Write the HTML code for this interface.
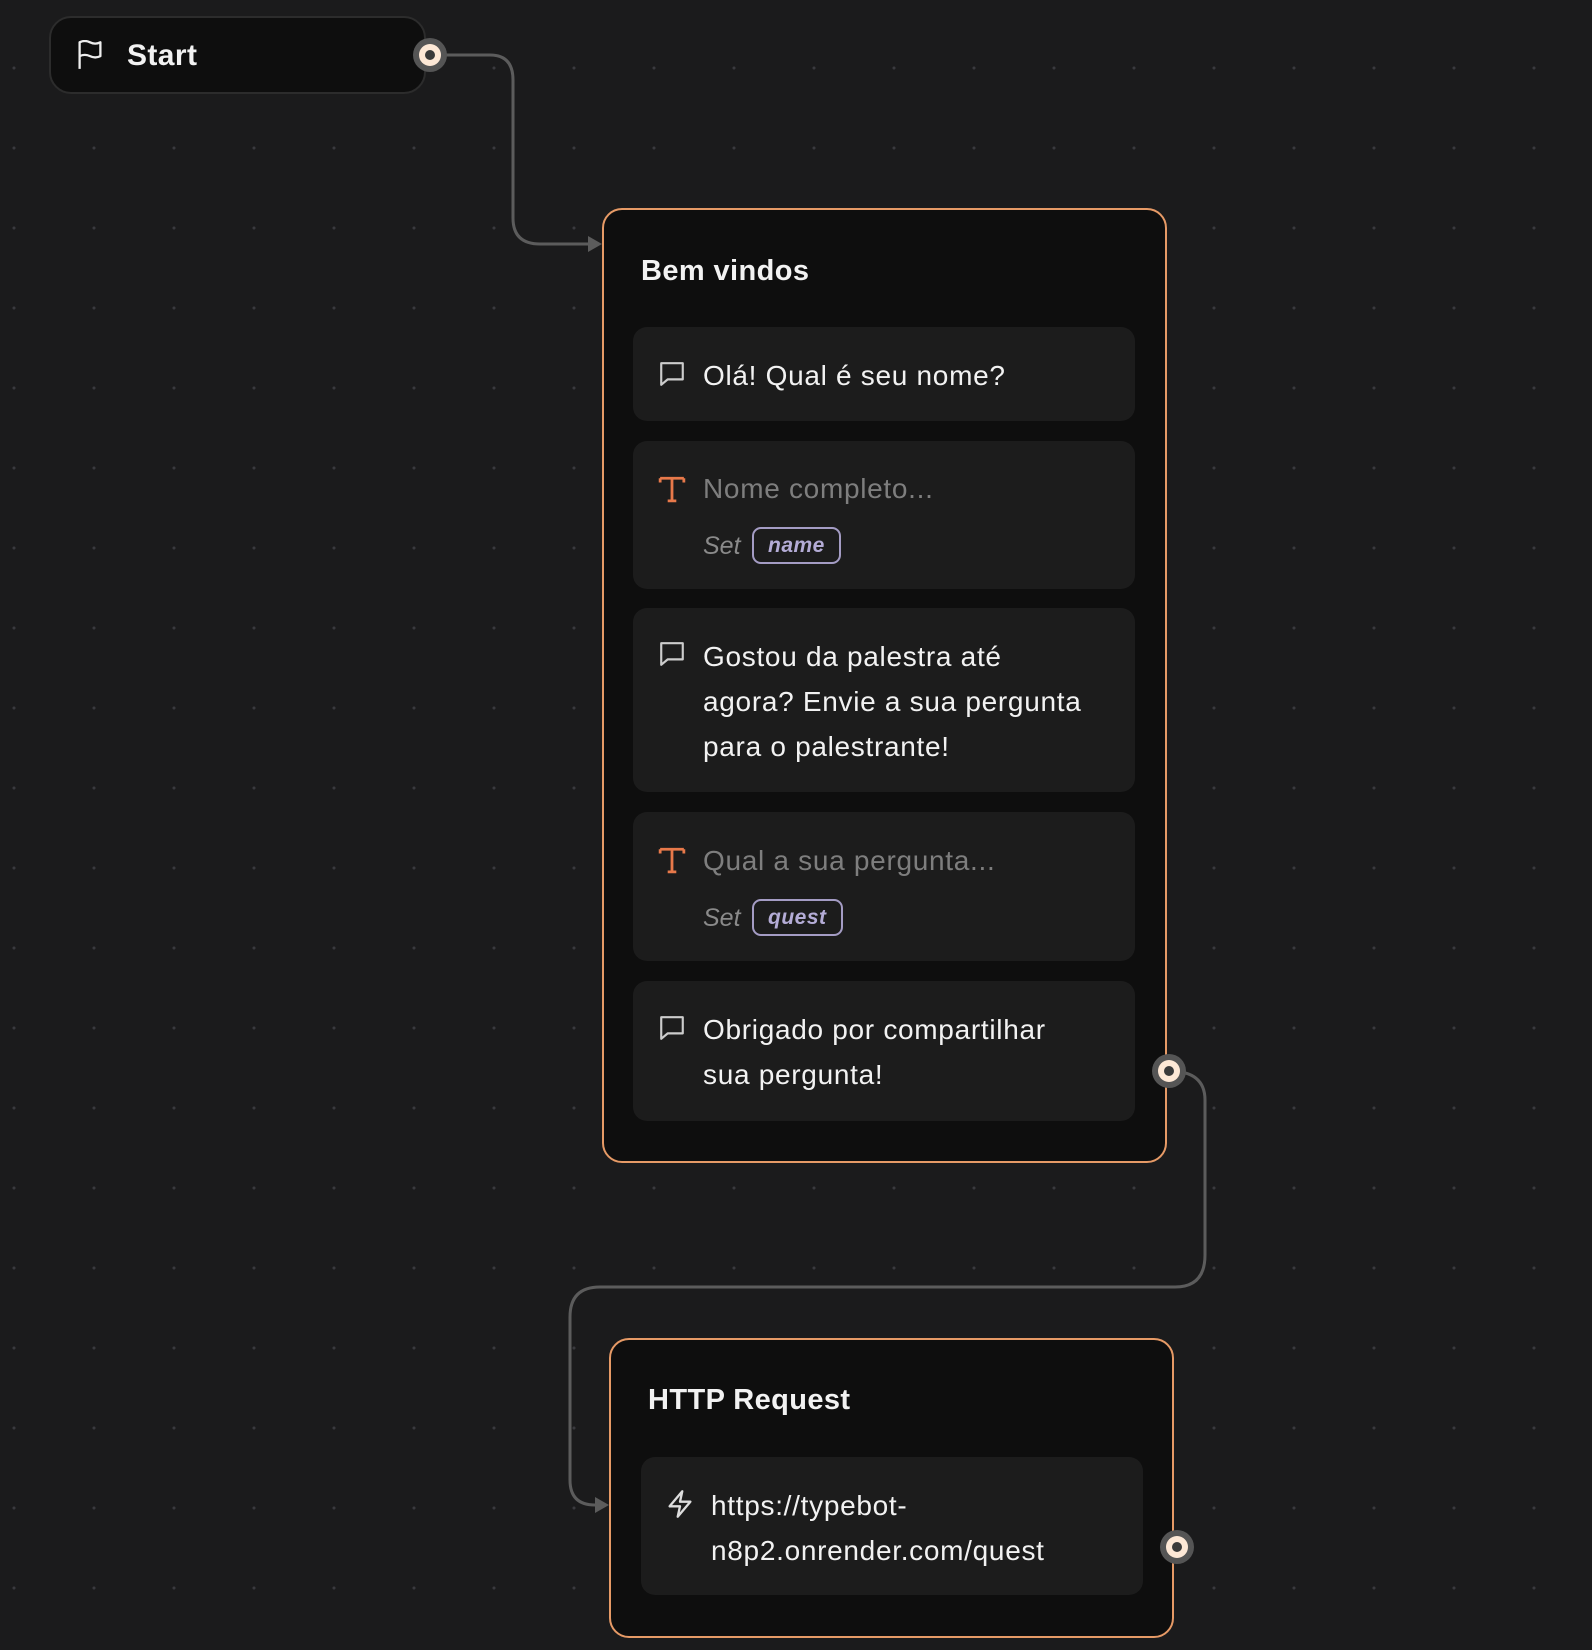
<!DOCTYPE html>
<html><head><meta charset="utf-8"><style>
*{margin:0;padding:0;box-sizing:border-box}
body{width:1592px;height:1650px;overflow:hidden;background:#1b1b1c;font-family:"Liberation Sans",sans-serif;color:#f2f2f2;position:relative;
background-image:radial-gradient(circle,#3a3a3e 1.3px,transparent 1.8px);background-size:80px 80px;background-position:-26px 28px}
.abs{position:absolute}
.node{position:absolute;background:#0e0e0e;border-radius:20px}
.blk{position:absolute;left:633px;width:502px;background:#1c1c1c;border-radius:14px}
.t{position:absolute;left:70px;font-size:28px;line-height:45px;white-space:nowrap;letter-spacing:0.7px}
.ic{position:absolute;left:25px}
.ph{color:#7e7e7e}
.set{position:absolute;left:70px;font-size:25px;font-style:italic;color:#8a8a8a}
.pill{position:absolute;left:119px;height:37px;border:2px solid #a49cc4;border-radius:9px;color:#b4acd6;font-weight:bold;font-style:italic;font-size:21px;line-height:33px;padding:0 14px;letter-spacing:0.5px}
.title{position:absolute;font-weight:bold;font-size:29px;letter-spacing:0.4px}
</style></head><body>
<svg class="abs" style="left:0;top:0" width="1592" height="1650">
<path d="M430 55 H490 Q513 55 513 80 V218 Q513 244 540 244 H590" fill="none" stroke="#5c5c5c" stroke-width="3"/>
<path d="M588 236 L602 244 L588 252Z" fill="#5c5c5c"/>
<path d="M1169 1071 Q1205 1071 1205 1100 V1255 Q1205 1287 1175 1287 H600 Q570 1287 570 1317 V1480 Q570 1505 595 1505 H600" fill="none" stroke="#5c5c5c" stroke-width="3"/>
<path d="M595 1497 L609 1505 L595 1513Z" fill="#5c5c5c"/>
</svg>
<div class="node" style="left:49px;top:16px;width:377px;height:78px;border:2px solid #2c2c2c;border-radius:22px">
<svg class="abs" style="left:25px;top:22px" width="28" height="30" viewBox="0 0 24 26" fill="none" stroke="#eee" stroke-width="2" stroke-linejoin="round"><path d="M3 25V2c3-1.5 6-1.5 9 0s6 1.5 9 0v12c-3 1.5-6 1.5-9 0s-6-1.5-9 0"/></svg>
<div class="title" style="left:76px;top:21px;font-size:30px">Start</div>
</div>
<div class="node" style="left:602px;top:208px;width:565px;height:955px;border:2px solid #e69a66"></div>
<div class="title" style="left:641px;top:255px">Bem vindos</div>
<svg class="abs" width="0" height="0"><defs>
<g id="chat"><path d="M3 3h20v15H9l-6 5z" fill="none" stroke="#ccc" stroke-width="2" stroke-linejoin="round"/></g>
<g id="tt"><path d="M2 3h22M13 3v21M9 24h8M2 3v4M24 3v4" fill="none" stroke="#e8794a" stroke-width="2.6"/></g>
</defs></svg>
<div class="blk" style="top:327px;height:94px">
<svg class="ic" style="top:33px" width="28" height="28" viewBox="0 0 26 26"><use href="#chat"/></svg>
<div class="t" style="top:26px">Olá! Qual é seu nome?</div></div>
<div class="blk" style="top:441px;height:148px">
<svg class="ic" style="top:34px" width="28" height="28" viewBox="0 0 26 26"><use href="#tt"/></svg>
<div class="t ph" style="top:25px">Nome completo...</div>
<div class="set" style="top:91px">Set</div><div class="pill" style="top:86px">name</div></div>
<div class="blk" style="top:608px;height:184px">
<svg class="ic" style="top:32px" width="28" height="28" viewBox="0 0 26 26"><use href="#chat"/></svg>
<div class="t" style="top:26px">Gostou da palestra até<br>agora? Envie a sua pergunta<br>para o palestrante!</div></div>
<div class="blk" style="top:812px;height:149px">
<svg class="ic" style="top:34px" width="28" height="28" viewBox="0 0 26 26"><use href="#tt"/></svg>
<div class="t ph" style="top:26px">Qual a sua pergunta...</div>
<div class="set" style="top:92px">Set</div><div class="pill" style="top:87px">quest</div></div>
<div class="blk" style="top:981px;height:140px">
<svg class="ic" style="top:33px" width="28" height="28" viewBox="0 0 26 26"><use href="#chat"/></svg>
<div class="t" style="top:26px">Obrigado por compartilhar<br>sua pergunta!</div></div>
<div class="node" style="left:609px;top:1338px;width:565px;height:300px;border:2px solid #e69a66"></div>
<div class="title" style="left:648px;top:1384px">HTTP Request</div>
<div class="blk" style="left:641px;width:502px;top:1457px;height:138px">
<svg class="ic" style="top:32px;left:25px" width="28" height="30" viewBox="0 0 24 26"><path d="M14 2L3 15h9l-2 9 11-13h-9z" fill="none" stroke="#ddd" stroke-width="2" stroke-linejoin="round"/></svg>
<div class="t" style="top:26px">https://typebot-<br>n8p2.onrender.com/quest</div></div>
<svg class="abs" style="left:0;top:0;pointer-events:none" width="1592" height="1650">
<g><circle cx="430" cy="55" r="17" fill="#555"/><circle cx="430" cy="55" r="11" fill="#fde8d6"/><circle cx="430" cy="55" r="5" fill="#3a3a3a"/></g>
<g><circle cx="1169" cy="1071" r="17" fill="#555"/><circle cx="1169" cy="1071" r="11" fill="#fde8d6"/><circle cx="1169" cy="1071" r="5" fill="#3a3a3a"/></g>
<g><circle cx="1177" cy="1547" r="17" fill="#555"/><circle cx="1177" cy="1547" r="11" fill="#fde8d6"/><circle cx="1177" cy="1547" r="5" fill="#3a3a3a"/></g>
</svg>
</body></html>
